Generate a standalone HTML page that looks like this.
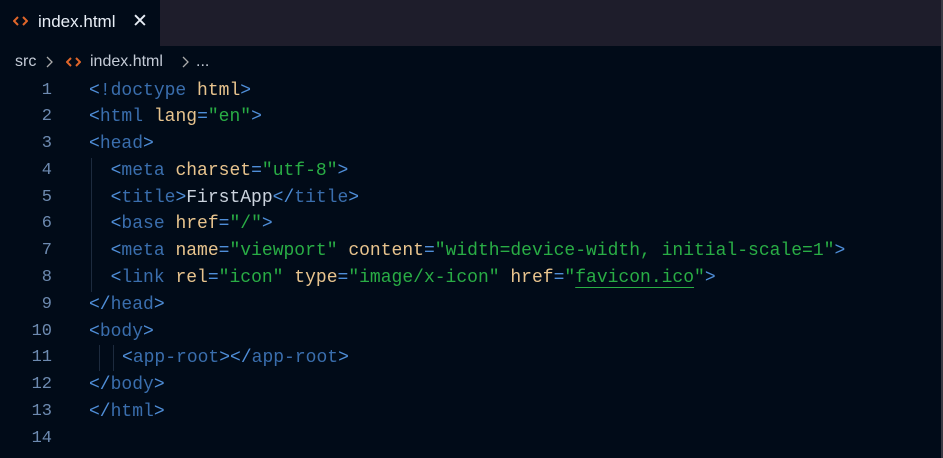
<!DOCTYPE html>
<html><head><style>
html,body{margin:0;width:943px;height:458px;overflow:hidden}
body{background:#010b18;position:relative;font-family:"Liberation Sans",sans-serif}
.bar{position:absolute;left:0;top:0;width:943px;height:46px;background:#1e1d2b}
.tab{position:absolute;left:0;top:0;width:160px;height:47px;background:#010b18;color:#e8eef6;font-size:17px}
.tab span{position:absolute;top:12px}
.sb{position:absolute;right:0;top:0;width:2px;height:458px;background:#3a3a44}
.crumb{position:absolute;top:53px;left:15px;font-size:16px;color:#c4cbd6;white-space:pre}
.code{position:absolute;left:0;top:77.6px;font-family:"Liberation Mono",monospace;font-size:18px;line-height:26.77px;white-space:pre}
.ln{position:absolute;left:0;width:52px;text-align:right;color:#6d8ab0;font-size:17px}
.l{position:absolute;left:89px}
.b{color:#4f8ed8}.t{color:#3a6ead}.a{color:#e8c48e}.s{color:#29ad45}.p{color:#cbd3de}
.g{position:absolute;width:1px;background:#1d2b3e}
u{text-decoration-color:#29ad45;text-underline-offset:5px}
svg{position:absolute}
</style></head><body>
<div class="bar"></div>
<div class="tab"><svg style="left:13px;top:16px" width="15" height="10" viewBox="0 0 15 10"><path d="M5 1L1 5L5 9M10 1L14 5L10 9" stroke="#e0662a" stroke-width="2" fill="none"/></svg><span style="left:38px">index.html</span><span style="left:132px;top:10px;font-size:19px">✕</span></div>
<div class="sb"></div>
<div class="crumb">src</div>
<svg style="left:45px;top:56px" width="8" height="12" viewBox="0 0 8 12"><path d="M2 1L7 6L2 11" stroke="#aaa" stroke-width="1.3" fill="none"/></svg>
<svg style="left:66px;top:57px" width="15" height="10" viewBox="0 0 15 10"><path d="M5 1L1 5L5 9M10 1L14 5L10 9" stroke="#e0662a" stroke-width="2" fill="none"/></svg>
<div class="crumb" style="left:90px">index.html</div>
<svg style="left:181px;top:56px" width="8" height="12" viewBox="0 0 8 12"><path d="M2 1L7 6L2 11" stroke="#aaa" stroke-width="1.3" fill="none"/></svg>
<div class="crumb" style="left:196px">...</div>
<div class="g" style="left:91px;top:158px;height:134px"></div>
<div class="g" style="left:99px;top:345px;height:26px"></div>
<div class="g" style="left:113px;top:345px;height:26px"></div>
<div class="code">
<div class="ln" style="top:0">1</div><div class="l" style="top:0"><span class="b">&lt;</span><span class="t">!doctype</span> <span class="a">html</span><span class="b">&gt;</span></div>
<div class="ln" style="top:26.77px">2</div><div class="l" style="top:26.77px"><span class="b">&lt;</span><span class="t">html</span> <span class="a">lang</span><span class="b">=</span><span class="s">"en"</span><span class="b">&gt;</span></div>
<div class="ln" style="top:53.54px">3</div><div class="l" style="top:53.54px"><span class="b">&lt;</span><span class="t">head</span><span class="b">&gt;</span></div>
<div class="ln" style="top:80.31px">4</div><div class="l" style="top:80.31px">  <span class="b">&lt;</span><span class="t">meta</span> <span class="a">charset</span><span class="b">=</span><span class="s">"utf-8"</span><span class="b">&gt;</span></div>
<div class="ln" style="top:107.08px">5</div><div class="l" style="top:107.08px">  <span class="b">&lt;</span><span class="t">title</span><span class="b">&gt;</span><span class="p">FirstApp</span><span class="b">&lt;/</span><span class="t">title</span><span class="b">&gt;</span></div>
<div class="ln" style="top:133.85px">6</div><div class="l" style="top:133.85px">  <span class="b">&lt;</span><span class="t">base</span> <span class="a">href</span><span class="b">=</span><span class="s">"/"</span><span class="b">&gt;</span></div>
<div class="ln" style="top:160.62px">7</div><div class="l" style="top:160.62px">  <span class="b">&lt;</span><span class="t">meta</span> <span class="a">name</span><span class="b">=</span><span class="s">"viewport"</span> <span class="a">content</span><span class="b">=</span><span class="s">"width=device-width, initial-scale=1"</span><span class="b">&gt;</span></div>
<div class="ln" style="top:187.39px">8</div><div class="l" style="top:187.39px">  <span class="b">&lt;</span><span class="t">link</span> <span class="a">rel</span><span class="b">=</span><span class="s">"icon"</span> <span class="a">type</span><span class="b">=</span><span class="s">"image/x-icon"</span> <span class="a">href</span><span class="b">=</span><span class="s">"<u>favicon.ico</u>"</span><span class="b">&gt;</span></div>
<div class="ln" style="top:214.16px">9</div><div class="l" style="top:214.16px"><span class="b">&lt;/</span><span class="t">head</span><span class="b">&gt;</span></div>
<div class="ln" style="top:240.93px">10</div><div class="l" style="top:240.93px"><span class="b">&lt;</span><span class="t">body</span><span class="b">&gt;</span></div>
<div class="ln" style="top:267.7px">11</div><div class="l" style="top:267.7px;left:122px"><span class="b">&lt;</span><span class="t">app-root</span><span class="b">&gt;&lt;/</span><span class="t">app-root</span><span class="b">&gt;</span></div>
<div class="ln" style="top:294.47px">12</div><div class="l" style="top:294.47px"><span class="b">&lt;/</span><span class="t">body</span><span class="b">&gt;</span></div>
<div class="ln" style="top:321.24px">13</div><div class="l" style="top:321.24px"><span class="b">&lt;/</span><span class="t">html</span><span class="b">&gt;</span></div>
<div class="ln" style="top:348px">14</div>
</div>
</body></html>
